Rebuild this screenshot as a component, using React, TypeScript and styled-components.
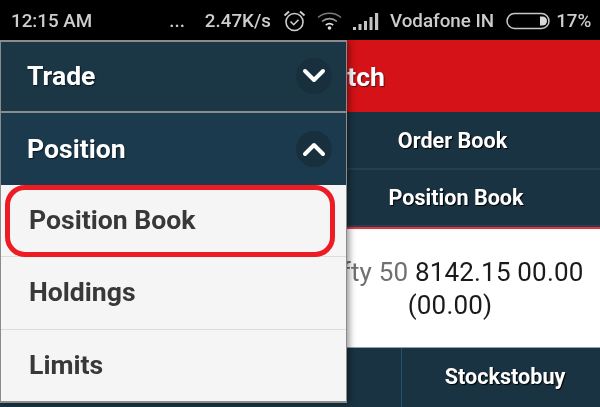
import styled, { createGlobalStyle } from "styled-components";

const GlobalStyle = createGlobalStyle`
  html, body {
    margin: 0;
    padding: 0;
    background: #000;
  }
  * {
    box-sizing: border-box;
  }
`;

const Screen = styled.div`
  position: relative;
  width: 600px;
  height: 407px;
  overflow: hidden;
  font-family: Roboto, "Liberation Sans", sans-serif;
  background: #1a3342;
  filter: blur(0.35px);
`;

const StatusBar = styled.div`
  display: flex;
  align-items: center;
  height: 40px;
  padding: 1px 10px 0 11px;
  background: #000;
  color: #cdcdcd;
  font-size: 18.8px;
  font-weight: 500;
`;

const StatusText = styled.span<{ $left?: number }>`
  margin-left: ${(p) => p.$left ?? 0}px;
  white-space: nowrap;
`;

const StatusIcon = styled.svg<{ $left: number }>`
  display: block;
  flex: none;
  margin-left: ${(p) => p.$left}px;
`;

const Header = styled.div`
  display: flex;
  align-items: center;
  justify-content: flex-end;
  height: 72px;
  padding-right: 215px;
  background: #d41217;
  color: #fff;
  font-size: 26.6px;
  font-weight: 700;
  text-shadow: 1px 1px 1px #5c1013;
`;

const NavRow = styled.div<{ $height: number; $inset: number }>`
  display: flex;
  align-items: center;
  justify-content: center;
  height: ${(p) => p.$height}px;
  padding-left: ${(p) => p.$inset}px;
  background: #1a3342;
  border-bottom: 2px solid #24404f;
  color: #fff;
  font-size: 21.6px;
  font-weight: 700;
  text-shadow: 1px 1px 1px #000;
`;

const Quote = styled.div`
  display: flex;
  align-items: center;
  justify-content: center;
  height: 121px;
  padding: 2px 0 0 300px;
  background: #fff;
  border-top: 2px solid #e8313a;
  border-bottom: 1px solid #8fa3ad;
  color: #1a1a1a;
  font-size: 26px;
  line-height: 33px;
  letter-spacing: 0.18px;
  text-align: center;
`;

const QuoteName = styled.span`
  color: #707070;
`;

const BottomTabs = styled.div`
  display: grid;
  grid-template-columns: 401px 1fr;
  height: 59px;
`;

const BottomTab = styled.div`
  display: flex;
  align-items: center;
  justify-content: center;
  padding-left: 8px;
  padding-bottom: 3px;
  border-left: 1px solid #28506a;
  background: #1a3342;
  color: #fff;
  font-size: 21.6px;
  font-weight: 700;
  text-shadow: 1px 1px 1px #000;
`;

const Drawer = styled.div`
  position: absolute;
  left: 0;
  top: 40px;
  width: 347px;
  height: 363px;
  border: 1px solid #8b8b8b;
  border-top-width: 2px;
  border-bottom-width: 3px;
  box-shadow: 2px 0 7px rgba(0, 0, 0, 0.45);
`;

const Section = styled.div<{ $open?: boolean }>`
  display: flex;
  align-items: center;
  justify-content: space-between;
  height: ${(p) => (p.$open ? 72 : 71)}px;
  padding: 0 14px 0 26px;
  background: ${(p) => (p.$open ? "#1c3a4e" : "#1b3644")};
  border-bottom: ${(p) => (p.$open ? "none" : "2px solid #8b8b8b")};
  color: #fff;
  font-size: 26.6px;
  font-weight: 700;
  text-shadow: 1px 1px 1px #0b1a22;
`;

const SectionTitle = styled.span<{ $lift: number }>`
  margin-bottom: ${(p) => p.$lift}px;
`;

const Chevron = styled.span<{ $lift: number }>`
  display: flex;
  align-items: center;
  justify-content: center;
  width: 36px;
  height: 36px;
  margin-bottom: ${(p) => p.$lift}px;
  border-radius: 50%;
  background: #18303d;
`;

const MenuItem = styled.div<{ $height: number }>`
  display: flex;
  align-items: center;
  height: ${(p) => p.$height}px;
  padding: 0 0 2px 28px;
  background: #f5f5f5;
  border-bottom: 1px solid #dcdcdc;
  color: #383838;
  font-size: 26.6px;
  font-weight: 700;

  &:nth-child(4) {
    padding-bottom: 4px;
  }

  &:last-child {
    border-bottom: none;
  }
`;

const Highlight = styled.div`
  position: absolute;
  left: 5px;
  top: 185px;
  width: 330px;
  height: 72px;
  border: 5px solid #ed1c24;
  border-radius: 20px;
`;

function Alarm() {
  return (
    <StatusIcon $left={12} width="23" height="24" viewBox="0 0 23 24" fill="none" stroke="#cdcdcd">
      <circle cx="11.5" cy="13" r="8.5" strokeWidth="1.6" />
      <path d="M7.5 12.5l3.2 3.2 4.8-5" strokeWidth="1.6" />
      <path d="M1.5 6.5 6 2.5M21.5 6.5 17 2.5" strokeWidth="2" />
    </StatusIcon>
  );
}

function Wifi() {
  return (
    <StatusIcon $left={11} width="25" height="19" viewBox="0 0 25 19" fill="none" stroke="#b5b5b5">
      <path d="M1 6.5C7.5 .8 17.5 .8 24 6.5" strokeWidth="1.4" stroke="#7a7a7a" />
      <path d="M5 10.5c4.5-3.8 10.5-3.8 15 0" strokeWidth="1.6" stroke="#9a9a9a" />
      <path d="M8.8 14c2.2-1.6 5.2-1.6 7.4 0" strokeWidth="1.8" stroke="#e0e0e0" />
      <circle cx="12.5" cy="17" r="1.8" fill="#e0e0e0" stroke="none" />
    </StatusIcon>
  );
}

function Signal() {
  return (
    <StatusIcon $left={11} width="26" height="18" viewBox="0 0 26 18" fill="#c4c4c4">
      <rect x="0" y="15" width="3" height="3" />
      <rect x="5.5" y="12" width="3" height="6" />
      <rect x="11" y="9" width="3" height="9" />
      <rect x="16.5" y="5" width="3" height="13" />
      <rect x="22" y="1" width="3.2" height="17" />
    </StatusIcon>
  );
}

function Battery() {
  return (
    <StatusIcon $left={12} width="44" height="18" viewBox="0 0 44 18" fill="none">
      <rect x="1" y="1.5" width="42" height="15" rx="7.5" stroke="#c8c8c8" strokeWidth="1.5" />
      <path d="M34 4.5h2.5a4.5 4.5 0 0 1 0 9H34z" fill="#d8d8d8" />
    </StatusIcon>
  );
}

function ChevronIcon({ up }: { up?: boolean }) {
  return (
    <Chevron $lift={up ? 0 : 1}>
      <svg width="24" height="16" viewBox="0 0 24 16" fill="none">
        <path
          d={up ? "M3 13 12 4l9 9" : "M3 3l9 9 9-9"}
          stroke="#fff"
          strokeWidth="4"
          strokeLinecap="round"
          strokeLinejoin="round"
        />
      </svg>
    </Chevron>
  );
}

export default function App() {
  return (
    <Screen>
      <GlobalStyle />
      <StatusBar>
        <StatusText>12:15 AM</StatusText>
        <StatusText $left={77}>...</StatusText>
        <StatusText $left={20}>2.47K/s</StatusText>
        <Alarm />
        <Wifi />
        <Signal />
        <StatusText $left={11}>Vodafone IN</StatusText>
        <Battery />
        <StatusText $left={6}>17%</StatusText>
      </StatusBar>

      <Header>Watch</Header>
      <NavRow $height={58} $inset={305}>Order Book</NavRow>
      <NavRow $height={57} $inset={312}>Position Book</NavRow>
      <Quote>
        <div>
          <QuoteName>Nifty 50</QuoteName> 8142.15 00.00
          <br />
          (00.00)
        </div>
      </Quote>
      <BottomTabs>
        <div />
        <BottomTab>Stockstobuy</BottomTab>
      </BottomTabs>

      <Drawer>
        <Section>
          <SectionTitle $lift={2}>Trade</SectionTitle>
          <ChevronIcon />
        </Section>
        <Section $open>
          <SectionTitle $lift={2}>Position</SectionTitle>
          <ChevronIcon up />
        </Section>
        <MenuItem $height={72}>Position Book</MenuItem>
        <MenuItem $height={73}>Holdings</MenuItem>
        <MenuItem $height={71}>Limits</MenuItem>
      </Drawer>
      <Highlight />
    </Screen>
  );
}
